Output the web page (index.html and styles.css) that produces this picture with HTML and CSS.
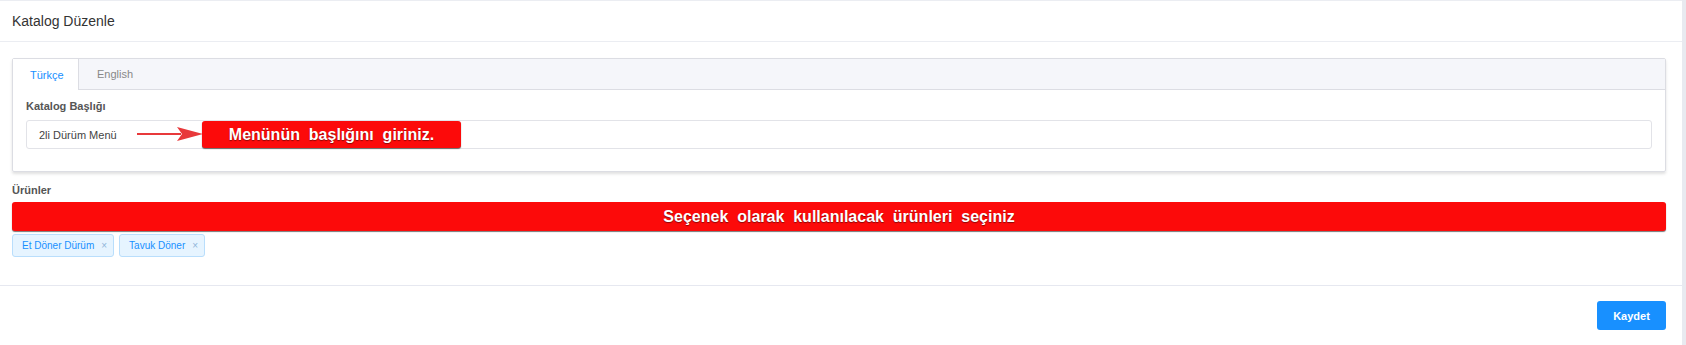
FILE: index.html
```html
<!DOCTYPE html>
<html lang="tr">
<head>
    <meta charset="UTF-8">
    <meta name="viewport" content="width=device-width, initial-scale=1.0">
    <title>Katalog Düzenle</title>
    <link rel="stylesheet" href="styles.css">
</head>
<body>
    <div class="panel">
        <div class="panel-header">Katalog Düzenle</div>

        <div class="panel-body">
            <div class="tab-card">
                <div class="tab-bar">
                    <div class="tab active">Türkçe</div>
                    <div class="tab">English</div>
                </div>
                <div class="tab-content">
                    <label class="field-label">Katalog Başlığı</label>
                    <div class="input-wrap">
                        <div class="text-input">2li Dürüm Menü</div>
                        <!-- annotation overlay -->
                        <svg class="note-arrow" width="66" height="14" viewBox="0 0 66 14">
                            <path d="M0 6h44v2H0z" fill="#e8393b"/>
                            <path d="M40 0L66 7L40 14L45 7z" fill="#e8393b"/>
                        </svg>
                        <div class="note-box">Menünün&nbsp; başlığını&nbsp; giriniz.</div>
                    </div>
                </div>
            </div>

            <label class="field-label products-label">Ürünler</label>
            <div class="note-bar">Seçenek&nbsp; olarak&nbsp; kullanılacak&nbsp; ürünleri&nbsp; seçiniz</div>
            <div class="tags">
                <span class="tag">Et Döner Dürüm <span class="tag-close">×</span></span>
                <span class="tag">Tavuk Döner <span class="tag-close">×</span></span>
            </div>
        </div>

        <div class="panel-footer">
            <button class="btn-primary">Kaydet</button>
        </div>
    </div>
</body>
</html>
```

FILE: styles.css
```css
body {
    margin: 0;
    background: #e8eaf0;
    font-family: "Liberation Sans", Arial, sans-serif;
    color: #333;
}

.panel {
    width: calc(100% - 4px);
    height: 345px;
    background: #fff;
    border-top: 1px solid #ebedf2;
    box-sizing: border-box;
}

.panel-header {
    height: 40px;
    padding-left: 12px;
    display: flex;
    align-items: center;
    font-size: 14px;
    color: #333;
    border-bottom: 1px solid #ebedf2;
}

.panel-body {
    padding: 16px 16px 0 12px;
}

/* tab card */
.tab-card {
    border: 1px solid #dcdde3;
    border-radius: 2px;
    box-shadow: 0 2px 3px rgba(0, 0, 0, 0.12);
}

.tab-bar {
    display: flex;
    height: 30px;
    background: #f5f6fa;
    border-bottom: 1px solid #dcdde3;
}

.tab {
    display: flex;
    align-items: center;
    padding: 0 18px;
    font-size: 11px;
    color: #888;
}

.tab.active {
    width: 66px;
    box-sizing: border-box;
    padding-left: 17px;
    background: #fff;
    color: #1890ff;
    border-right: 1px solid #dcdde3;
    margin-bottom: -1px;
}

.tab-content {
    padding: 8px 13px 22px 13px;
}

.field-label {
    display: block;
    font-size: 11px;
    font-weight: bold;
    color: #555;
    line-height: 16px;
    margin-bottom: 6px;
}

.input-wrap {
    position: relative;
}

.text-input {
    height: 29px;
    box-sizing: border-box;
    border: 1px solid #e2e3e8;
    border-radius: 3px;
    padding: 0 12px;
    display: flex;
    align-items: center;
    font-size: 11px;
    color: #444;
}

.note-arrow {
    position: absolute;
    left: 111px;
    top: 7px;
}

.note-box {
    position: absolute;
    left: 176px;
    top: 1px;
    width: 259px;
    height: 27px;
    border-radius: 3px;
    background: #fc0a0a;
    box-shadow: 0 1px 1px #666;
    color: #fff;
    font-size: 16px;
    font-weight: bold;
    display: flex;
    align-items: center;
    justify-content: center;
    text-shadow: 0 1px 1px rgba(0, 0, 0, 0.45);
}

/* products */
.products-label {
    margin-top: 10px;
    margin-bottom: 4px;
}

.note-bar {
    height: 29px;
    border-radius: 3px;
    background: #fc0a0a;
    box-shadow: 0 1px 1px #777;
    color: #fff;
    font-size: 16px;
    font-weight: bold;
    display: flex;
    align-items: center;
    justify-content: center;
    text-shadow: 0 1px 1px rgba(0, 0, 0, 0.45);
}

.tags {
    display: flex;
    gap: 5px;
    margin-top: 3px;
}

.tag {
    display: flex;
    align-items: center;
    height: 23px;
    box-sizing: border-box;
    padding: 0 6px 0 9px;
    background: #e6f4ff;
    border: 1px solid #b9defc;
    border-radius: 3px;
    font-size: 10px;
    color: #1890ff;
}

.tag-close {
    margin-left: 7px;
    color: #8fb4da;
    font-size: 10px;
}

/* footer */
.panel-footer {
    margin-top: 28px;
    border-top: 1px solid #e6e8f0;
    padding: 15px 16px 0 0;
    display: flex;
    justify-content: flex-end;
}

.btn-primary {
    width: 69px;
    height: 29px;
    border: none;
    border-radius: 3px;
    background: #1890ff;
    color: #fff;
    font-family: "Liberation Sans", Arial, sans-serif;
    font-size: 11px;
    font-weight: bold;
}
```
